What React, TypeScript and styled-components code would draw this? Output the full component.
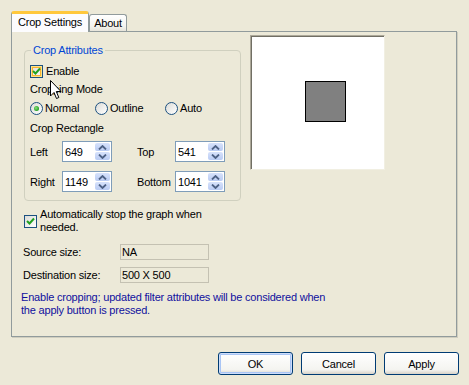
import React from 'react'
import styled, { createGlobalStyle } from 'styled-components'

const GlobalStyle = createGlobalStyle`
  body {
    margin: 0;
    background: #ECE9D8;
    font-family: "Liberation Sans", Arial, sans-serif;
    font-size: 11px;
    letter-spacing: -0.2px;
    color: #000;
  }
`

const Window = styled.div`
  position: relative;
  width: 469px;
  height: 385px;
  box-sizing: border-box;
  padding: 11px 0 0 11px;
  display: flex;
  flex-direction: column;
  overflow: hidden;
`

const TabStrip = styled.div`
  display: flex;
  align-items: flex-end;
  height: 20px;
  position: relative;
  z-index: 2;
`

const Tab = styled.div<{ $active?: boolean; $width: number }>`
  box-sizing: border-box;
  width: ${p => p.$width}px;
  height: ${p => (p.$active ? 21 : 17)}px;
  margin-bottom: ${p => (p.$active ? -1 : 0)}px;
  border: 1px solid #919B9C;
  border-bottom: none;
  border-top: ${p => (p.$active ? '3px solid #FFC83C' : '1px solid #919B9C')};
  border-radius: 3px 3px 0 0;
  background: ${p => (p.$active ? '#FCFCFE' : 'linear-gradient(#FFFFFF, #F3F3EF 70%, #E6E4DA)')};
  display: flex;
  align-items: center;
  justify-content: center;
  padding-bottom: ${p => (p.$active ? 2 : 0)}px;
  line-height: 13px;
`

const Panel = styled.div`
  box-sizing: border-box;
  width: 446px;
  height: 306px;
  border: 1px solid #919B9C;
  box-shadow: 1px 1px 0 #D0CEBF;
  display: flex;
  flex-direction: column;
`

const TopRow = styled.div`
  display: flex;
  align-items: flex-start;
  padding-left: 12px;
`

const Group = styled.fieldset`
  margin: 12px 0 0 0;
  padding: 0 5px 8px 5px;
  width: 217px;
  box-sizing: border-box;
  border: 1px solid #D0D0BF;
  border-radius: 4px;
  min-inline-size: 0;
`

const Legend = styled.legend`
  padding: 0 2px;
  margin-left: 1px;
  color: #0046D5;
  line-height: 13px;
`

const Row = styled.div<{ $top: number }>`
  display: flex;
  align-items: center;
  gap: 3px;
  height: 13px;
  margin-top: ${p => p.$top}px;
  line-height: 13px;
`

const Caption = styled.div<{ $top: number }>`
  margin-top: ${p => p.$top}px;
  line-height: 13px;
`

const Box = styled.span<{ $hover?: boolean }>`
  box-sizing: border-box;
  width: 13px;
  height: 13px;
  flex: none;
  border: 1px solid #1C5180;
  background: linear-gradient(135deg, #DCDCD7, #FFFFFF);
  box-shadow: ${p => (p.$hover ? 'inset 0 0 0 1px #FCE48A, inset 0 0 0 2px #F8B330' : 'none')};
  display: flex;
  align-items: center;
  justify-content: center;
`

const RadioRow = styled.div`
  display: grid;
  grid-template-columns: 65px 70px auto;
  height: 13px;
  margin-top: 6px;
  line-height: 13px;
`

const RadioOption = styled.div`
  display: flex;
  align-items: center;
  gap: 2px;
`

const RadioDot = styled.span<{ $on?: boolean }>`
  box-sizing: border-box;
  width: 13px;
  height: 13px;
  border-radius: 50%;
  border: 1px solid #1C5180;
  background: linear-gradient(135deg, #DCDCD7, #FFFFFF);
  display: flex;
  align-items: center;
  justify-content: center;
  &::after {
    content: '';
    display: ${p => (p.$on ? 'block' : 'none')};
    width: 5px;
    height: 5px;
    border-radius: 50%;
    background: radial-gradient(circle at 40% 40%, #8BE07E, #21A121 70%);
  }
`

const SpinGrid = styled.div`
  display: grid;
  grid-template-columns: 32px 50px 25px 38px 50px;
  grid-auto-rows: 21px;
  row-gap: 9px;
  align-items: center;
  margin-top: 6px;
`

const SpinBox = styled.div`
  box-sizing: border-box;
  height: 21px;
  border: 1px solid #7F9DB9;
  background: #fff;
  display: flex;
  align-items: center;
  justify-content: space-between;
  padding: 1px 1px 1px 2px;
`

const SpinButtons = styled.div`
  width: 15px;
  height: 100%;
  display: flex;
  flex-direction: column;
  gap: 1px;
`

const SpinHalf = styled.div`
  flex: 1;
  border-radius: 2px;
  background: linear-gradient(#D7E2FB, #B9CBF3);
  display: flex;
  align-items: center;
  justify-content: center;
`

const Preview = styled.div`
  box-sizing: border-box;
  width: 135px;
  height: 135px;
  margin: 3px 0 0 9px;
  background: #fff;
  border: 1px solid;
  border-color: #ACA899 #F1EFE2 #F1EFE2 #ACA899;
  box-shadow: inset 1px 1px 0 #716F64;
  display: flex;
  align-items: center;
  justify-content: center;
  padding: 0 0 2px 16px;
`

const CropRect = styled.div`
  box-sizing: border-box;
  width: 41px;
  height: 41px;
  background: #808080;
  border: 1px solid #000;
`

const AutoRow = styled.div`
  display: flex;
  align-items: center;
  gap: 3px;
  margin: 7px 0 0 12px;
  line-height: 13px;
`

const FieldGrid = styled.div`
  display: grid;
  grid-template-columns: 97px 89px;
  grid-auto-rows: 16px;
  row-gap: 7px;
  align-items: center;
  margin: 10px 0 0 11px;
`

const ReadOnly = styled.div`
  box-sizing: border-box;
  height: 16px;
  border: 1px solid #C4C1B2;
  padding-left: 1px;
  line-height: 14px;
`

const Note = styled.div`
  margin: 8px 0 0 9px;
  color: #10109E;
  line-height: 13px;
`

const ButtonRow = styled.div`
  display: flex;
  justify-content: flex-end;
  gap: 8px;
  margin-top: 15px;
  padding-right: 10px;
`

const Button = styled.button<{ $default?: boolean }>`
  box-sizing: border-box;
  width: 75px;
  height: 23px;
  border: 1px solid #003C74;
  border-radius: 3px;
  background: linear-gradient(#FFFFFF, #F4F4F0 80%, #D8D3C8);
  box-shadow: ${p => (p.$default ? 'inset 0 0 0 1px #CEDDF9, inset 0 0 0 2px #A9C5F5' : 'none')};
  font: inherit;
  letter-spacing: inherit;
  color: #000;
  padding: 0;
`

const Cursor = styled.svg`
  position: absolute;
  left: 50px;
  top: 80px;
  z-index: 5;
`

const Check = () => (
  <svg width="9" height="9" viewBox="0 0 9 9">
    <path d="M1 4 L3.5 6.5 L8 1.5" fill="none" stroke="#21A121" strokeWidth="2" />
  </svg>
)

const Arrow = ({ up }: { up?: boolean }) => (
  <svg width="9" height="5" viewBox="0 0 9 5">
    <path d={up ? 'M1 4.5 L4.5 1 L8 4.5' : 'M1 0.5 L4.5 4 L8 0.5'} fill="none" stroke="#4D6185" strokeWidth="1.8" />
  </svg>
)

const Spin = ({ value }: { value: string }) => (
  <SpinBox>
    <span>{value}</span>
    <SpinButtons>
      <SpinHalf><Arrow up /></SpinHalf>
      <SpinHalf><Arrow /></SpinHalf>
    </SpinButtons>
  </SpinBox>
)

const App = () => {
  return (
    <Window>
      <GlobalStyle />
      <TabStrip>
        <Tab $active $width={78}>Crop Settings</Tab>
        <Tab $width={38}>About</Tab>
      </TabStrip>
      <Panel>
        <TopRow>
          <Group>
            <Legend>Crop Attributes</Legend>
            <Row $top={8}>
              <Box $hover><Check /></Box>
              <span>Enable</span>
            </Row>
            <Caption $top={5}>Cropping Mode</Caption>
            <RadioRow>
              <RadioOption><RadioDot $on />Normal</RadioOption>
              <RadioOption><RadioDot />Outline</RadioOption>
              <RadioOption><RadioDot />Auto</RadioOption>
            </RadioRow>
            <Caption $top={7}>Crop Rectangle</Caption>
            <SpinGrid>
              <span>Left</span>
              <Spin value="649" />
              <span />
              <span>Top</span>
              <Spin value="541" />
              <span>Right</span>
              <Spin value="1149" />
              <span />
              <span>Bottom</span>
              <Spin value="1041" />
            </SpinGrid>
          </Group>
          <Preview>
            <CropRect />
          </Preview>
        </TopRow>
        <AutoRow>
          <Box><Check /></Box>
          <span>Automatically stop the graph when<br />needed.</span>
        </AutoRow>
        <FieldGrid>
          <span>Source size:</span>
          <ReadOnly>NA</ReadOnly>
          <span>Destination size:</span>
          <ReadOnly>500 X 500</ReadOnly>
        </FieldGrid>
        <Note>
          Enable cropping; updated filter attributes will be considered when<br />
          the apply button is pressed.
        </Note>
      </Panel>
      <ButtonRow>
        <Button $default>OK</Button>
        <Button>Cancel</Button>
        <Button>Apply</Button>
      </ButtonRow>
      <Cursor width="13" height="20" viewBox="0 0 13 20">
        <path d="M0.5 0.5 L0.5 16 L4 12.5 L6.5 18.5 L8.8 17.5 L6.3 11.5 L11 11.5 Z" fill="#fff" stroke="#000" strokeWidth="1" />
      </Cursor>
    </Window>
  )
}

export default App
